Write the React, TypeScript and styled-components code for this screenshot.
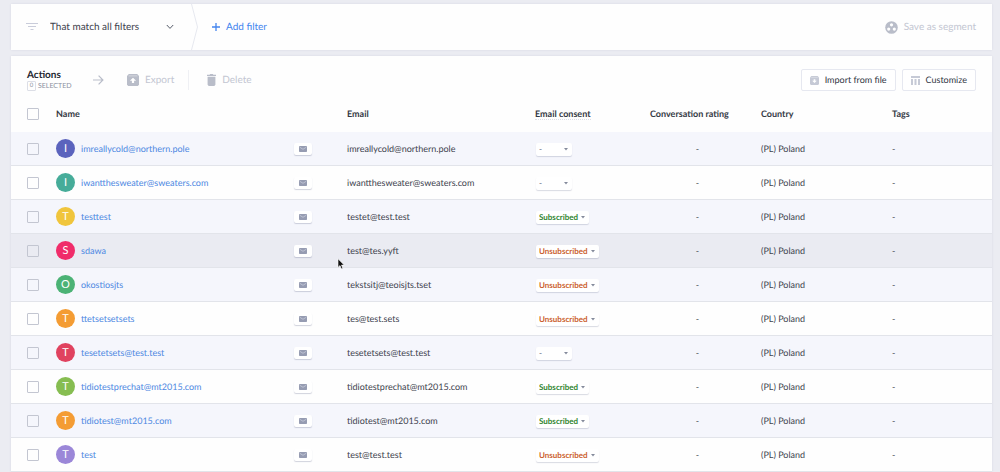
import React, { useState } from "react";
import styled, { createGlobalStyle } from "styled-components";

const GlobalStyle = createGlobalStyle`
  * { box-sizing: border-box; }
  body {
    margin: 0;
    background: #ebecf2;
    color: #3d424d;
    font: 9px/16px Lato, "Liberation Sans", sans-serif;
    text-rendering: geometricPrecision;
  }
  button, select, input { font: inherit; color: inherit; margin: 0; text-rendering: inherit; }
  button { cursor: pointer; }
`;

const Page = styled.main`
  display: flex;
  flex-direction: column;
  gap: 6px;
  padding: 4px 8px 0 11px;
  height: 100vh;
  overflow: hidden;
`;

const Panel = styled.section`
  background: #fefefe;
  box-shadow: 0 0 2px rgba(90, 100, 140, 0.12);
`;

const FilterBar = styled(Panel)`
  display: flex;
  align-items: stretch;
  flex: none;
  height: 46px;
  padding-right: 16px;
`;

const FilterMode = styled.label`
  display: flex;
  align-items: center;
  gap: 12px;
  width: 180px;
  padding-left: 15px;
`;

const ModeField = styled.span`
  display: grid;
  align-items: center;
  width: 124px;
  > * { grid-area: 1 / 1; }
  > svg { justify-self: end; pointer-events: none; }
`;

const ModeSelect = styled.select`
  appearance: none;
  width: 100%;
  padding: 0;
  border: 0;
  background: transparent;
  font-size: 10px;
`;

const PlainButton = styled.button<{ $tone: "link" | "muted" }>`
  display: flex;
  align-items: center;
  gap: 6px;
  padding: 0;
  border: 0;
  background: none;
  font-size: 10px;
  color: ${(p) => (p.$tone === "link" ? "#4485ee" : "#c3c6d2")};
`;

const AddFilter = styled(PlainButton)`
  margin-left: 14px;
`;

const SaveSegment = styled(PlainButton)`
  margin-left: auto;
`;

const TablePanel = styled(Panel)`
  flex: 1;
  min-height: 0;
  overflow: hidden;
`;

const Toolbar = styled.div`
  display: flex;
  align-items: center;
  height: 48px;
  padding: 0 16px;
`;

const Selection = styled.div`
  width: 66px;
`;

const ToolbarTitle = styled.h1`
  margin: 0;
  font-size: 10px;
  line-height: 12px;
  font-weight: 700;
  color: #22262f;
`;

const SelectedCount = styled.div`
  display: flex;
  align-items: center;
  gap: 2px;
  font-size: 7px;
  line-height: 8px;
  color: #8b90a0;
`;

const CountBox = styled.span`
  width: 9px;
  border: 1px solid #dcdee6;
  border-radius: 1px;
  text-align: center;
  font-size: 6px;
`;

const ToolbarActions = styled.div`
  display: flex;
  align-items: center;
  > * + * {
    margin-left: 14px;
    padding-left: 18px;
    border-left: 1px solid #eff0f4;
    height: 20px;
  }
`;

const ArrowSlot = styled.span`
  display: flex;
  width: 34px;
`;

const ToolbarEnd = styled.div`
  display: flex;
  gap: 6px;
  margin-left: auto;
`;

const OutlineButton = styled.button`
  display: flex;
  align-items: center;
  gap: 6px;
  height: 22px;
  padding: 0 8px;
  border: 1px solid #e6e8f0;
  border-radius: 2px;
  background: #fff;
  color: #2f343f;
`;

const Table = styled.table`
  width: 100%;
  min-width: 880px;
  table-layout: fixed;
  border-collapse: separate;
  border-spacing: 0;
`;

const Column = styled.col<{ $width?: number }>`
  width: ${(p) => (p.$width ? `${p.$width}px` : "auto")};
`;

const HeadCell = styled.th`
  height: 28px;
  padding: 0 0 8px;
  text-align: left;
  font-weight: 700;
  color: #343944;
  white-space: nowrap;
  &:first-child { padding-left: 16px; }
`;

const Hint = styled.abbr`
  text-decoration: none;
  border-bottom: 1px dotted #dcdee6;
`;

const Row = styled.tr<{ $active: boolean; $striped: boolean }>`
  background: ${(p) => (p.$active ? "#eaebf2" : p.$striped ? "#f5f6fc" : "#fefefe")};
`;

const Cell = styled.td<{ $center?: boolean }>`
  height: 34px;
  padding: 0 ${(p) => (p.$center ? "16px" : "0")} 0 0;
  border-bottom: 1px solid #e2e4ea;
  text-align: ${(p) => (p.$center ? "center" : "left")};
  white-space: nowrap;
  &:first-child { padding-left: 16px; }
`;

const Tick = styled.input`
  appearance: none;
  display: block;
  width: 12px;
  height: 12px;
  border: 1px solid #c3c6d1;
  border-radius: 1px;
  background: transparent;
  &:checked { background: #4485ee; }
`;

const Contact = styled.div`
  display: flex;
  align-items: center;
  padding-right: 35px;
`;

const Avatar = styled.span<{ $color: string }>`
  width: 19px;
  height: 19px;
  margin-right: 6px;
  border-radius: 50%;
  background: ${(p) => p.$color};
  color: #fff;
  font-size: 11px;
  line-height: 19px;
  text-align: center;
`;

const NameLink = styled.a`
  color: #4d88e2;
  text-decoration: none;
`;

const MailButton = styled.button`
  display: flex;
  align-items: center;
  justify-content: center;
  width: 18px;
  height: 12px;
  margin-left: auto;
  padding: 0;
  border: 0;
  border-radius: 2px;
  background: #fff;
  box-shadow: 0 1px 1px rgba(70, 80, 120, 0.25);
`;

type Consent = "-" | "Subscribed" | "Unsubscribed";

const consentStyle: Record<Consent, { width: number; color: string }> = {
  "-": { width: 36, color: "#8a90a0" },
  Subscribed: { width: 53, color: "#31852f" },
  Unsubscribed: { width: 63, color: "#cb5f2e" },
};

const ConsentField = styled.span<{ $value: Consent }>`
  display: inline-grid;
  align-items: center;
  vertical-align: middle;
  width: ${(p) => consentStyle[p.$value].width}px;
  height: 13px;
  margin-left: 1px;
  border-radius: 2px;
  background: #fff;
  box-shadow: 0 1px 1px rgba(70, 80, 120, 0.2);
  color: ${(p) => consentStyle[p.$value].color};
  > * { grid-area: 1 / 1; }
  > svg { justify-self: end; margin-right: 4px; pointer-events: none; }
`;

const ConsentSelect = styled.select`
  appearance: none;
  width: 100%;
  height: 13px;
  padding: 0 0 0 3px;
  border: 0;
  background: transparent;
  font-size: 8px;
  line-height: 13px;
  font-weight: 700;
`;

const Cursor = styled.svg`
  position: absolute;
  left: 337px;
  top: 258px;
  pointer-events: none;
`;

const FilterIcon = () => (
  <svg width="12" height="8" viewBox="0 0 12 8" stroke="#c9ccda" strokeWidth="1">
    <path d="M0 .5h12M2 3.5h8M4.5 6.5h3" />
  </svg>
);

const ChevronIcon = () => (
  <svg width="8" height="6" viewBox="0 0 8 6" fill="none" stroke="#555b68" strokeWidth="1">
    <path d="M.8 1 4 4.4 7.2 1" />
  </svg>
);

const Separator = () => (
  <svg width="7" height="46" viewBox="0 0 7 46" fill="none" stroke="#e6e8ef" strokeWidth="1">
    <path d="M.5 0 6.5 23 .5 46" />
  </svg>
);

const PlusIcon = () => (
  <svg width="8" height="8" viewBox="0 0 8 8" stroke="#4485ee" strokeWidth="1.3">
    <path d="M4 0v8M0 4h8" />
  </svg>
);

const SegmentIcon = () => (
  <svg width="13" height="13" viewBox="0 0 13 13">
    <circle cx="6.5" cy="6.5" r="6.3" fill="#b9bdc9" />
    <g fill="#fff">
      <circle cx="6.5" cy="3.8" r="1.6" />
      <circle cx="3.7" cy="8.1" r="1.6" />
      <circle cx="9.3" cy="8.1" r="1.6" />
    </g>
  </svg>
);

const ArrowIcon = () => (
  <svg width="11" height="10" viewBox="0 0 11 10" fill="none" stroke="#b9bdc9" strokeWidth="1.2">
    <path d="M0 5h9.6M5.6.7 9.9 5 5.6 9.3" />
  </svg>
);

const ArchiveIcon = ({ size, color, down }: { size: number; color: string; down?: boolean }) => (
  <svg width={size} height={size} viewBox="0 0 12 12">
    <path d="M1.8 0h8.4L12 2v8.8L10.8 12H1.2L0 10.8V2z" fill={color} />
    <path d="M1.6 1.9h8.8" stroke="#fff" strokeWidth=".8" opacity=".5" />
    <path
      d={down ? "M6 9.4 2.9 6.4h2V4.2h2.2v2.2h2z" : "M6 3.8 2.9 6.8h2V9h2.2V6.8h2z"}
      fill="#fff"
    />
  </svg>
);

const TrashIcon = () => (
  <svg width="9" height="12" viewBox="0 0 9 12" fill="#b9bdc9">
    <path d="M0 .8h2.6L3.2 0h2.6l.6.8H9V2H0zM.6 2.8h7.8v8L7.3 12H1.7L.6 10.8z" />
  </svg>
);

const ColumnsIcon = () => (
  <svg width="9" height="9" viewBox="0 0 9 9" fill="#c6cad6">
    <path d="M0 0h9v2H0zM0 3h2v6H0zM3.5 3h2v6h-2zM7 3h2v6H7z" />
  </svg>
);

const MailIcon = () => (
  <svg width="8" height="6" viewBox="0 0 8 6">
    <rect width="8" height="6" rx=".8" fill="#969cb2" />
    <path d="M.7 1.2 4 3.3l3.3-2.1" fill="none" stroke="#d9dce8" strokeWidth=".6" />
  </svg>
);

const CaretIcon = () => (
  <svg width="4" height="3" viewBox="0 0 4 3" fill="#858b9c">
    <path d="M0 0h4L2 2.6z" />
  </svg>
);

interface ContactRow {
  name: string;
  email: string;
  color: string;
  consent: Consent;
}

const contacts: ContactRow[] = [
  { name: "imreallycold@northern.pole", email: "imreallycold@northern.pole", color: "#5b63bd", consent: "-" },
  { name: "iwantthesweater@sweaters.com", email: "iwantthesweater@sweaters.com", color: "#46ac99", consent: "-" },
  { name: "testtest", email: "testet@test.test", color: "#f0c53c", consent: "Subscribed" },
  { name: "sdawa", email: "test@tes.yyft", color: "#f02c6a", consent: "Unsubscribed" },
  { name: "okostiosjts", email: "tekstsitj@teoisjts.tset", color: "#4bb275", consent: "Unsubscribed" },
  { name: "ttetsetsetsets", email: "tes@test.sets", color: "#f49c33", consent: "Unsubscribed" },
  { name: "tesetetsets@test.test", email: "tesetetsets@test.test", color: "#e0425f", consent: "-" },
  { name: "tidiotestprechat@mt2015.com", email: "tidiotestprechat@mt2015.com", color: "#86bd51", consent: "Subscribed" },
  { name: "tidiotest@mt2015.com", email: "tidiotest@mt2015.com", color: "#f49c33", consent: "Subscribed" },
  { name: "test", email: "test@test.test", color: "#9b87d8", consent: "Unsubscribed" },
];

function ConsentPicker({ initial, owner }: { initial: Consent; owner: string }) {
  const [value, setValue] = useState<Consent>(initial);
  return (
    <ConsentField $value={value}>
      <ConsentSelect
        aria-label={`Email consent of ${owner}`}
        value={value}
        onChange={(e) => setValue(e.target.value as Consent)}
      >
        <option>-</option>
        <option>Subscribed</option>
        <option>Unsubscribed</option>
      </ConsentSelect>
      <CaretIcon />
    </ConsentField>
  );
}

export default function App() {
  const [active, setActive] = useState(3);
  return (
    <>
      <GlobalStyle />
      <Page>
        <FilterBar>
          <FilterMode>
            <FilterIcon />
            <ModeField>
              <ModeSelect aria-label="Filter mode">
                <option>That match all filters</option>
                <option>That match any filter</option>
              </ModeSelect>
              <ChevronIcon />
            </ModeField>
          </FilterMode>
          <Separator />
          <AddFilter $tone="link"><PlusIcon />Add filter</AddFilter>
          <SaveSegment $tone="muted"><SegmentIcon />Save as segment</SaveSegment>
        </FilterBar>
        <TablePanel>
          <Toolbar>
            <Selection>
              <ToolbarTitle>Actions</ToolbarTitle>
              <SelectedCount><CountBox>0</CountBox>SELECTED</SelectedCount>
            </Selection>
            <ArrowSlot><ArrowIcon /></ArrowSlot>
            <ToolbarActions>
              <PlainButton $tone="muted"><ArchiveIcon size={12} color="#b9bdc9" />Export</PlainButton>
              <PlainButton $tone="muted"><TrashIcon />Delete</PlainButton>
            </ToolbarActions>
            <ToolbarEnd>
              <OutlineButton><ArchiveIcon size={9} color="#c6cad6" down />Import from file</OutlineButton>
              <OutlineButton><ColumnsIcon />Customize</OutlineButton>
            </ToolbarEnd>
          </Toolbar>
          <Table>
            <colgroup>
              <Column $width={45} />
              <Column />
              <Column $width={188} />
              <Column $width={115} />
              <Column $width={111} />
              <Column $width={131} />
              <Column $width={100} />
            </colgroup>
            <thead>
              <tr>
                <HeadCell><Tick type="checkbox" aria-label="Select all" /></HeadCell>
                <HeadCell>Name</HeadCell>
                <HeadCell>Email</HeadCell>
                <HeadCell><Hint>Email consent</Hint></HeadCell>
                <HeadCell>Conversation rating</HeadCell>
                <HeadCell>Country</HeadCell>
                <HeadCell>Tags</HeadCell>
              </tr>
            </thead>
            <tbody>
              {contacts.map((c, i) => (
                <Row key={c.email} $active={i === active} $striped={i % 2 === 0} onMouseEnter={() => setActive(i)}>
                  <Cell><Tick type="checkbox" aria-label={`Select ${c.name}`} /></Cell>
                  <Cell>
                    <Contact>
                      <Avatar $color={c.color}>{c.name[0].toUpperCase()}</Avatar>
                      <NameLink href="#">{c.name}</NameLink>
                      <MailButton aria-label={`Write to ${c.name}`}><MailIcon /></MailButton>
                    </Contact>
                  </Cell>
                  <Cell>{c.email}</Cell>
                  <Cell><ConsentPicker initial={c.consent} owner={c.name} /></Cell>
                  <Cell $center>-</Cell>
                  <Cell>(PL) Poland</Cell>
                  <Cell>-</Cell>
                </Row>
              ))}
            </tbody>
          </Table>
        </TablePanel>
      </Page>
      <Cursor width="8" height="12" viewBox="0 0 8 12">
        <path d="M1 .8v8.6l2-1.8 1.3 3.2 1.5-.6-1.3-3.1h2.7z" fill="#111" stroke="#fff" strokeWidth=".6" />
      </Cursor>
    </>
  );
}
